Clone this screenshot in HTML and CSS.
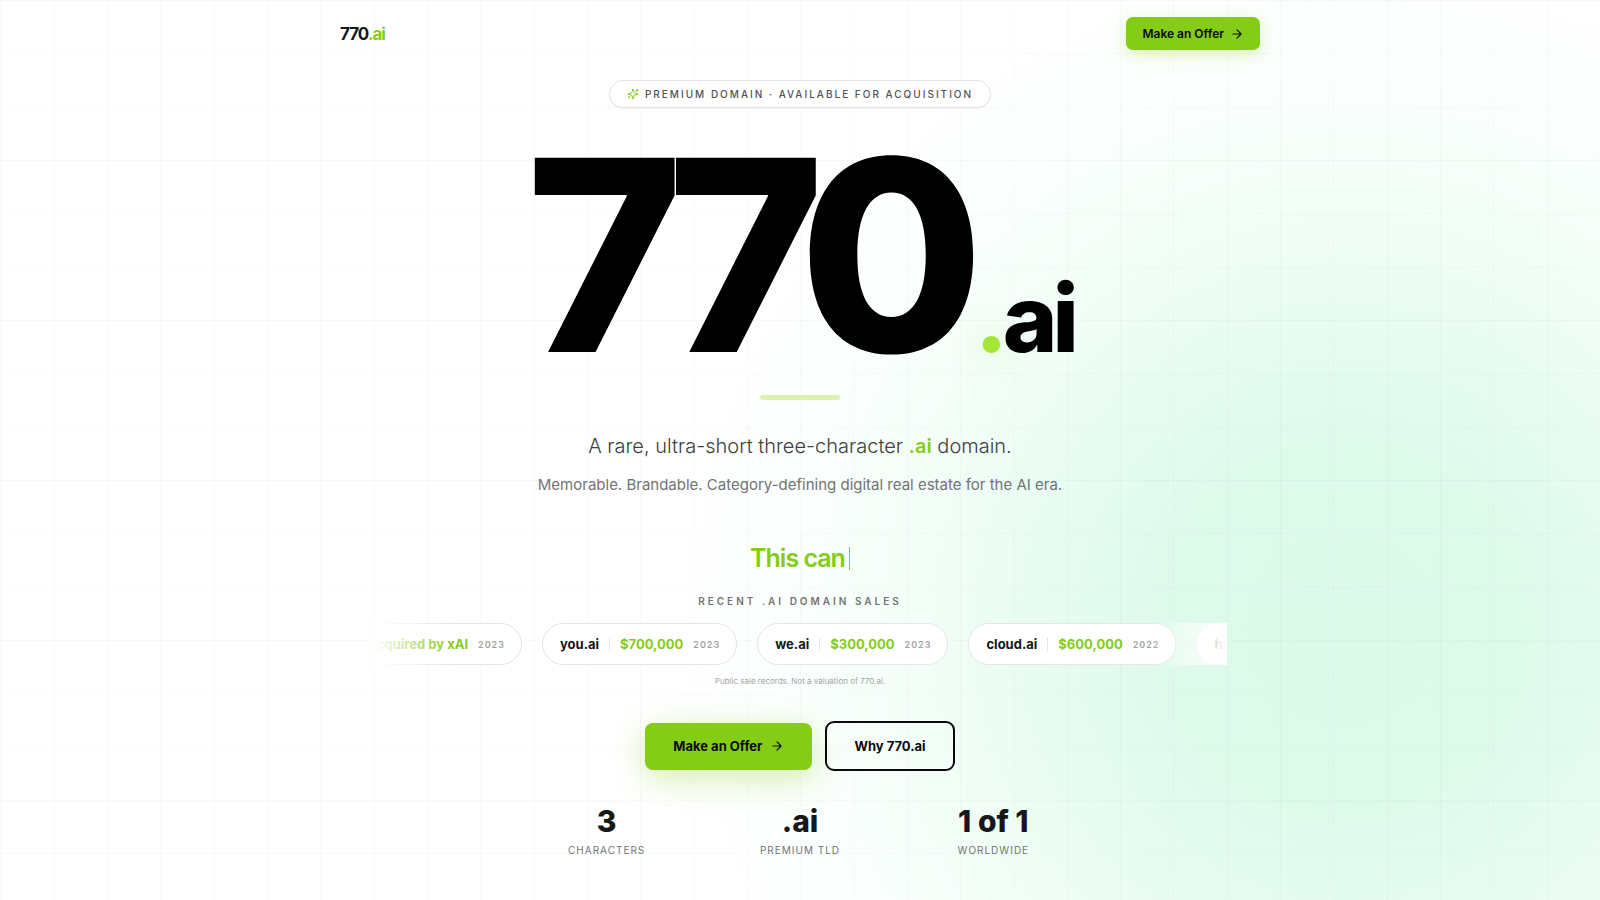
FILE: index.html
```html
<!DOCTYPE html>
<html lang="en">
<head>
<meta charset="utf-8">
<meta name="viewport" content="width=device-width, initial-scale=1">
<title>770.ai</title>
<link rel="stylesheet" href="styles.css">
</head>
<body>
<div class="page">
  <header class="header">
    <a class="logo" href="#">770<span class="lime">.ai</span></a>
    <button class="btn btn-small" type="button">Make an Offer
      <svg class="arrow" viewBox="0 0 24 24"><path d="M5 12h14M12 5l7 7-7 7"/></svg>
    </button>
  </header>
  <main class="hero">
    <p class="badge">
      <svg class="sparkle" viewBox="0 0 24 24"><path d="M9.937 15.5A2 2 0 0 0 8.5 14.063l-6.135-1.582a.5.5 0 0 1 0-.962L8.5 9.936A2 2 0 0 0 9.937 8.5l1.582-6.135a.5.5 0 0 1 .963 0L14.063 8.5A2 2 0 0 0 15.5 9.937l6.135 1.581a.5.5 0 0 1 0 .964L15.5 14.063a2 2 0 0 0-1.437 1.437l-1.582 6.135a.5.5 0 0 1-.963 0z"/><path d="M20 3v4M22 5h-4M4 17v2M5 18H3"/></svg>
      Premium Domain · Available for Acquisition
    </p>
    <h1 class="title">770<span class="tld"><span class="dot">.</span>ai</span></h1>
    <div class="bar"></div>
    <p class="tagline">A rare, ultra-short three-character <strong class="lime">.ai</strong> domain.</p>
    <p class="sub">Memorable. Brandable. Category-defining digital real estate for the AI era.</p>
    <p class="typed">This can<span class="caret"></span></p>
    <h2 class="sales-title">Recent .ai domain sales</h2>
    <div class="ticker">
      <ul class="track">
        <li class="pill"><span class="name">x.ai</span><span class="price">Acquired by xAI</span><span class="year">2023</span></li>
        <li class="pill"><span class="name">you.ai</span><span class="price">$700,000</span><span class="year">2023</span></li>
        <li class="pill"><span class="name">we.ai</span><span class="price">$300,000</span><span class="year">2023</span></li>
        <li class="pill"><span class="name">cloud.ai</span><span class="price">$600,000</span><span class="year">2022</span></li>
        <li class="pill"><span class="name">hr.ai</span></li>
      </ul>
    </div>
    <p class="note">Public sale records. Not a valuation of 770.ai.</p>
    <div class="actions">
      <button class="btn btn-large" type="button">Make an Offer
        <svg class="arrow" viewBox="0 0 24 24"><path d="M5 12h14M12 5l7 7-7 7"/></svg>
      </button>
      <button class="btn btn-outline" type="button">Why 770.ai</button>
    </div>
    <dl class="stats">
      <div class="stat"><dt>Characters</dt><dd>3</dd></div>
      <div class="stat"><dt>Premium TLD</dt><dd>.ai</dd></div>
      <div class="stat"><dt>Worldwide</dt><dd>1 of 1</dd></div>
    </dl>
  </main>
</div>
</body>
</html>
```

FILE: styles.css
```css
* { box-sizing: border-box; margin: 0; padding: 0; }

body {
  font-family: Inter, "Liberation Sans", sans-serif;
  color: #171717;
  background: #fff;
}

.page {
  min-height: 100vh;
  overflow: hidden;
  background:
    linear-gradient(to right, rgba(0, 0, 0, 0.025) 1px, transparent 1px) 0 0 / calc(100vw / 30) calc(100vw / 30),
    linear-gradient(to bottom, rgba(0, 0, 0, 0.025) 1px, transparent 1px) 0 0 / calc(100vw / 30) calc(100vw / 30),
    radial-gradient(circle 700px at 84% 630px, #dcf9ea 0%, #ddfaea 25%, #e8fcf2 45%, #f3fef8 62%, #fbfffd 80%, #fff 100%);
}

.header {
  display: flex;
  align-items: center;
  justify-content: space-between;
  max-width: 960px;
  margin: 0 auto;
  padding: 17px 20px 0;
}

.logo {
  font-size: 17px;
  font-weight: 700;
  letter-spacing: -1px;
  color: #171717;
  text-decoration: none;
}

.lime { color: #84cc16; }

.btn {
  display: inline-flex;
  align-items: center;
  justify-content: center;
  gap: 8px;
  border: 0;
  font-family: inherit;
  font-weight: 700;
  color: #0a0a0a;
  background: #84cc16;
  cursor: pointer;
}

.btn-small {
  gap: 6px;
  height: 33px;
  padding: 0 16px;
  border-radius: 7px;
  font-size: 12px;
  font-weight: 600;
  box-shadow: 0 4px 16px rgba(132, 204, 22, 0.3);
}

.btn-large {
  height: 47px;
  padding: 0 28px;
  border-radius: 8px;
  font-size: 13px;
  box-shadow: 0 8px 32px rgba(132, 204, 22, 0.35);
}

.btn-outline {
  height: 50px;
  padding: 0 27px;
  border: 2px solid #0a0a0a;
  border-radius: 9px;
  font-size: 13px;
  background: transparent;
}

.arrow, .sparkle {
  width: 14px;
  height: 14px;
  fill: none;
  stroke: currentColor;
  stroke-width: 2;
  stroke-linecap: round;
  stroke-linejoin: round;
}

.sparkle { width: 12px; height: 12px; color: #84cc16; }

.hero {
  display: flex;
  flex-direction: column;
  align-items: center;
  padding: 30px 20px 32px;
  text-align: center;
}

.badge {
  display: flex;
  align-items: center;
  gap: 6px;
  height: 28px;
  padding: 0 17px;
  border: 1px solid #e5e5e5;
  border-radius: 14px;
  background: #fff;
  box-shadow: 0 1px 2px rgba(0, 0, 0, 0.05);
  font-size: 10px;
  font-weight: 500;
  letter-spacing: 2px;
  text-transform: uppercase;
  color: #525252;
}

.title {
  margin-top: 27px;
  font-size: 267px;
  font-weight: 800;
  line-height: 240px;
  letter-spacing: -21px;
  color: #000;
}

.tld {
  margin-left: 12px;
  font-size: 93px;
  line-height: 93px;
  letter-spacing: -5px;
}

.dot {
  color: #a3e635;
  text-shadow: 0 0 32px rgba(163, 230, 53, 0.5);
}

.bar {
  width: 80px;
  height: 5px;
  margin-top: 20px;
  border-radius: 3px;
  background: #daf2ae;
}

.tagline {
  margin-top: 32px;
  font-size: 20px;
  font-weight: 300;
  line-height: 28px;
  color: #404040;
}

.tagline strong { font-weight: 600; }

.sub {
  margin-top: 13px;
  font-size: 15px;
  line-height: 24px;
  color: #737373;
}

.typed {
  display: flex;
  align-items: center;
  height: 40px;
  margin-top: 41px;
  font-size: 25px;
  font-weight: 600;
  letter-spacing: -1px;
  color: #84cc16;
}

.caret {
  width: 1px;
  height: 23px;
  margin-left: 4px;
  background: #84cc16;
}

.sales-title {
  margin-top: 15px;
  font-size: 10px;
  font-weight: 600;
  line-height: 16px;
  letter-spacing: 3px;
  text-transform: uppercase;
  color: #737373;
}

.ticker {
  position: relative;
  width: 100%;
  max-width: 853px;
  margin-top: 14px;
  overflow: hidden;
}

.ticker::before, .ticker::after {
  content: "";
  position: absolute;
  top: 0;
  bottom: 0;
  width: 80px;
}

.ticker::before { left: 0; background: linear-gradient(to right, #fff, transparent); }
.ticker::after { right: 0; background: linear-gradient(to left, #fff, transparent); }

.track {
  display: flex;
  gap: 20px;
  width: max-content;
  margin-left: -68px;
  list-style: none;
}

.pill {
  display: flex;
  align-items: center;
  gap: 10px;
  height: 42px;
  padding: 0 16px 0 17px;
  border: 1px solid #e5e5e5;
  border-radius: 21px;
  background: #fff;
  white-space: nowrap;
}

.name {
  padding-right: 10px;
  border-right: 1px solid #e5e5e5;
  font-size: 13px;
  font-weight: 700;
  line-height: 13px;
}

.price {
  font-size: 13px;
  font-weight: 700;
  color: #84cc16;
}

.year {
  font-size: 9px;
  font-weight: 600;
  letter-spacing: 1px;
  color: #a3a3a3;
}

.note {
  margin-top: 9px;
  font-size: 8px;
  line-height: 14px;
  color: #a3a3a3;
}

.actions {
  display: flex;
  align-items: center;
  gap: 13px;
  margin-top: 33px;
}

.stats {
  display: grid;
  grid-template-columns: repeat(3, 1fr);
  gap: 20px;
  width: 100%;
  max-width: 560px;
  margin-top: 30px;
}

.stat { display: flex; flex-direction: column-reverse; }

.stat dd {
  font-size: 30px;
  font-weight: 800;
  line-height: 40px;
}

.stat dt {
  margin-top: 1px;
  font-size: 10px;
  line-height: 16px;
  letter-spacing: 1px;
  text-transform: uppercase;
  color: #737373;
}
```
